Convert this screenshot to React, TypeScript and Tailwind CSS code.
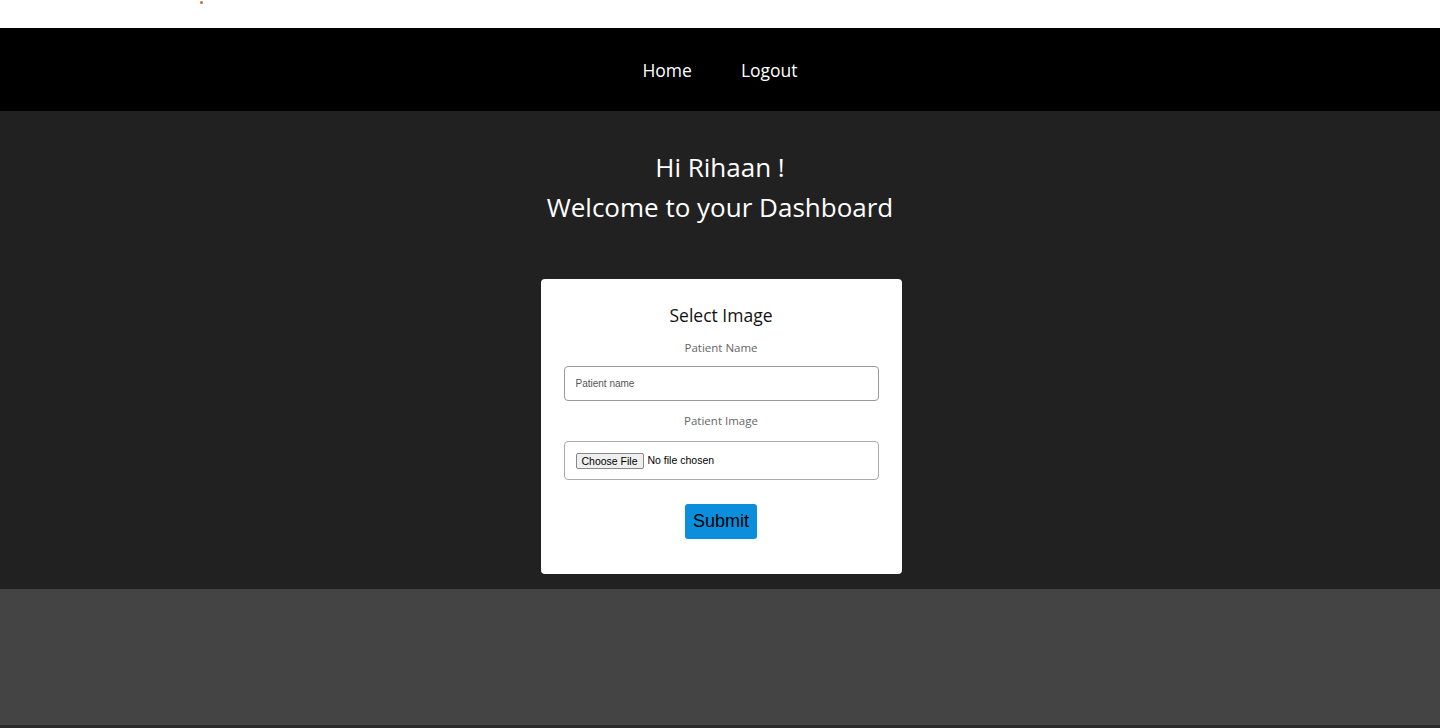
export default function App() {
  return (
    <div className="min-h-[728px] flex flex-col bg-[#444444] font-['Open_Sans',sans-serif]">
      <div className="h-[28px] bg-white pl-[200px]">
        <span className="block h-[3px] w-[3px] rounded-full bg-[#c0703a] mt-[1px]" />
      </div>
      <nav className="h-[83px] bg-black flex items-center justify-center gap-[49px] pt-[2px]">
        <a className="text-[17.5px] text-white">Home</a>
        <a className="text-[17.5px] text-white">Logout</a>
      </nav>
      <section className="bg-[#212121] flex flex-col items-center pt-[36px] pb-[15px]">
        <h1 className="text-[26px] leading-[40px] text-white text-center">
          Hi Rihaan !
          <br />
          Welcome to your Dashboard
        </h1>
        <form className="mt-[52px] ml-[2px] w-[361px] bg-white rounded-[4px] px-[23px] pt-[22px] pb-[35px] flex flex-col items-center">
          <h2 className="text-[17.5px] leading-[28px] text-[#111]">Select Image</h2>
          <label className="mt-[9px] text-[11.5px] leading-[20px] text-[#666]">Patient Name</label>
          <input
            type="text"
            placeholder="Patient name"
            className="mt-[8px] w-full h-[35px] border border-[#999] rounded-[4px] px-[11px] text-[10px] font-['Liberation_Sans',sans-serif] placeholder:text-[#555] outline-none"
          />
          <label className="mt-[10px] text-[11.5px] leading-[20px] text-[#666]">Patient Image</label>
          <div className="mt-[10px] w-full h-[39px] border border-[#aaa] rounded-[4px] px-[11px] flex items-center font-['Liberation_Sans',sans-serif] text-[10.5px] text-black">
            <span className="border border-[#888] bg-[#efefef] rounded-[2px] px-[5px] leading-[14px]">Choose File</span>
            <span className="ml-[4px]">No file chosen</span>
          </div>
          <button
            type="button"
            className="mt-[24px] w-[72px] h-[35px] bg-[#0b8fdc] rounded-[3px] text-[18px] text-black font-['Liberation_Sans',sans-serif]"
          >
            Submit
          </button>
        </form>
      </section>
      <div className="flex-1" />
      <div className="h-[3px] bg-[#2a2a2a]" />
    </div>
  );
}
